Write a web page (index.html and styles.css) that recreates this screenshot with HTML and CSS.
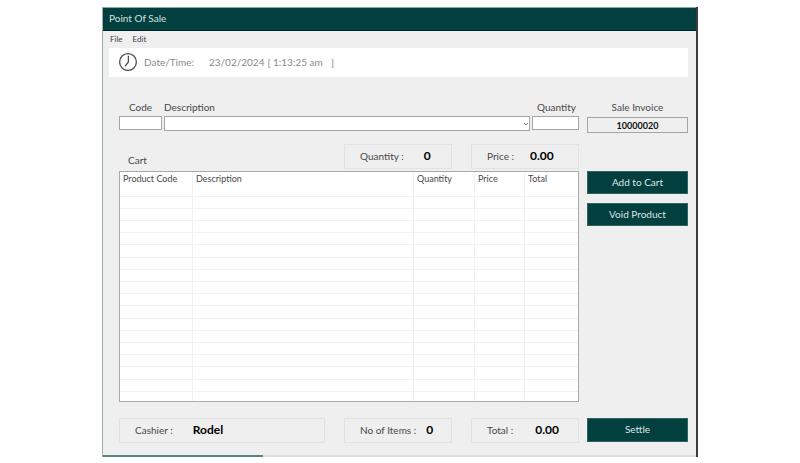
FILE: index.html
```html
<!DOCTYPE html>
<html lang="en">
<head>
<meta charset="utf-8">
<title>Point Of Sale</title>
<meta name="viewport" content="width=device-width, initial-scale=1">
<link rel="stylesheet" href="styles.css">
</head>
<body>
<main class="window">
  <header class="titlebar"><h1>Point Of Sale</h1></header>
  <nav class="menubar"><a href="#file">File</a><a href="#edit">Edit</a></nav>
  <section class="datebar">
    <svg class="clock" viewBox="0 0 20 20" aria-hidden="true"><circle cx="10" cy="10" r="8.4"/><path d="M10.4 3.8V10L7 14.4"/></svg>
    <span class="datelabel">Date/Time:</span>
    <span class="date">23/02/2024</span><span class="bracket">[</span><span class="time">1:13:25 am</span><span>]</span>
  </section>
  <div class="content">
    <form class="entry">
      <div class="field"><label for="code">Code</label><input id="code" type="text"></div>
      <div class="field"><label class="flush" for="description">Description</label>
        <div class="combo"><select id="description"><option></option></select>
          <svg class="chevron" viewBox="0 0 6 6" aria-hidden="true"><path d="M1 2l2 2 2-2"/></svg></div>
      </div>
      <div class="field"><label for="quantity" class="right">Quantity</label><input id="quantity" type="text"></div>
    </form>
    <div class="field invoice"><label for="invoice">Sale Invoice</label><input id="invoice" type="text" value="10000020" readonly></div>

    <div class="summary">
      <h2>Cart</h2>
      <div class="box"><span>Quantity :</span><strong>0</strong></div>
      <div class="box"><span>Price :</span><strong>0.00</strong></div>
    </div>

    <div class="cart">
      <table>
        <colgroup><col class="c-code"><col class="c-desc"><col class="c-qty"><col class="c-price"><col></colgroup>
        <thead><tr><th>Product Code</th><th>Description</th><th>Quantity</th><th>Price</th><th>Total</th></tr></thead>
        <tbody>
          <tr><td></td><td></td><td></td><td></td><td></td></tr>
          <tr><td></td><td></td><td></td><td></td><td></td></tr>
          <tr><td></td><td></td><td></td><td></td><td></td></tr>
          <tr><td></td><td></td><td></td><td></td><td></td></tr>
          <tr><td></td><td></td><td></td><td></td><td></td></tr>
          <tr><td></td><td></td><td></td><td></td><td></td></tr>
          <tr><td></td><td></td><td></td><td></td><td></td></tr>
          <tr><td></td><td></td><td></td><td></td><td></td></tr>
          <tr><td></td><td></td><td></td><td></td><td></td></tr>
          <tr><td></td><td></td><td></td><td></td><td></td></tr>
          <tr><td></td><td></td><td></td><td></td><td></td></tr>
          <tr><td></td><td></td><td></td><td></td><td></td></tr>
          <tr><td></td><td></td><td></td><td></td><td></td></tr>
          <tr><td></td><td></td><td></td><td></td><td></td></tr>
          <tr><td></td><td></td><td></td><td></td><td></td></tr>
          <tr><td></td><td></td><td></td><td></td><td></td></tr>
          <tr><td></td><td></td><td></td><td></td><td></td></tr>
        </tbody>
      </table>
    </div>
    <div class="actions"><button type="button">Add to Cart</button><button type="button">Void Product</button></div>

    <div class="totals">
      <div class="box cashier"><span>Cashier :</span><strong>Rodel</strong></div>
      <div class="box"><span>No of Items :</span><strong>0</strong></div>
      <div class="box"><span>Total :</span><strong>0.00</strong></div>
    </div>
    <div class="settle"><button type="button">Settle</button></div>
  </div>
  <div class="bottomline"></div>
</main>
</body>
</html>
```
FILE: styles.css
```css
* { box-sizing: border-box; }

body {
  margin: 0;
  padding: 7px 8px 6px;
  background: #fff;
  color: #484848;
  font: 10px/12px "Century Gothic", Lato, sans-serif;
}

.window {
  max-width: 596px;
  margin: 0 auto;
  background: #efefef;
  border-left: 1px solid #9db0a8;
  border-right: 2px solid #3a3d3d;
}

.titlebar {
  height: 24px;
  padding: 0 6px 2px;
  display: flex;
  align-items: center;
  background: #023f3f;
  border-top: 1px solid #8ba8a4;
  border-bottom: 1px solid #012626;
}

h1, h2 { margin: 0; font-size: 10px; font-weight: 400; }
h1 { color: #d5e0e0; }

.menubar {
  height: 17px;
  padding: 0 7px 2px;
  display: flex;
  align-items: center;
  gap: 10px;
  font-size: 8px;
}
.menubar a { color: #3c3c3c; text-decoration: none; }

.datebar {
  height: 29px;
  margin: 0 8px 0 6px;
  padding: 0 9px 2px;
  display: flex;
  align-items: center;
  background: #fff;
  color: #8a8a8a;
}
.clock { width: 20px; height: 20px; margin-right: 6px; fill: none; stroke: #4c4c4c; stroke-width: 1.3; }
.datelabel { width: 65px; }
.date { width: 56px; }
.bracket { width: 8px; text-align: center; }
.time { width: 58px; }

.content {
  padding: 24px 8px 0 16px;
  display: grid;
  grid-template-columns: 1fr 101px;
  column-gap: 8px;
}

.entry {
  display: grid;
  grid-template-columns: 43px 1fr 47px;
  column-gap: 2px;
}

.field { display: flex; flex-direction: column; }
.field label { height: 15px; line-height: 12px; text-align: center; white-space: nowrap; }
.field label.flush { text-align: left; }
.field label.right { align-self: flex-end; padding-right: 3px; }

input, select {
  width: 100%;
  height: 14px;
  padding: 0 3px;
  border: 1px solid #a5a5a5;
  border-radius: 0;
  background: #fff;
  color: inherit;
  font: inherit;
}
select { display: block; height: 15px; appearance: none; }
.combo { position: relative; }
.chevron { position: absolute; right: 1px; top: 5px; width: 6px; height: 6px; fill: none; stroke: #777; stroke-width: 1; }
.invoice input { height: 16px; margin-top: 1px; background: #efefef; color: #111; font-size: 9px; font-weight: 700; text-align: center; }

.summary, .totals {
  grid-column: 1;
  display: grid;
  grid-template-columns: 1fr 108px 108px;
  column-gap: 19px;
}
.summary { margin-top: 11px; }
.summary h2 { align-self: end; padding-left: 9px; margin-bottom: 3px; }

.box {
  height: 25px;
  padding: 0 15px 2px;
  display: flex;
  align-items: center;
  gap: 20px;
  border: 1px solid #e2e2e2;
  white-space: nowrap;
}
.box strong { font-size: 12px; color: #000; }
.summary .box:last-child { gap: 16px; }
.totals .box { gap: 10px; }
.totals .box:last-child { gap: 22px; }
.totals .box.cashier { gap: 20px; }

.cart { grid-column: 1; margin-top: 2px; border: 1px solid #a9a9a9; background: #fff; }
table { width: 100%; border-collapse: separate; border-spacing: 0; table-layout: fixed; }
.c-code { width: 73px; }
.c-desc { width: 221px; }
.c-qty { width: 61px; }
.c-price { width: 50px; }
th, td { padding: 0; border-right: 1px solid #f1f1f1; border-bottom: 1px solid #f1f1f1; }
th:last-child, td:last-child { border-right: 0; }
th { height: 25px; padding: 1px 3px 0; font-size: 9px; font-weight: 400; text-align: left; vertical-align: top; white-space: nowrap; }
td { height: 12px; }
tr:nth-child(5n) td { height: 13px; }
tr:last-child td { height: 9px; border-bottom: 0; }

.actions { margin-top: 2px; display: flex; flex-direction: column; gap: 9px; }
button {
  width: 100%;
  height: 23px;
  padding: 0 0 2px;
  border: 1px solid #2e6360;
  border-radius: 0;
  background: #023f3f;
  color: #dce6e5;
  font: inherit;
}

.totals, .settle { margin-top: 16px; }
.settle button { height: 24px; }

.bottomline { height: 2px; margin-top: 12px; background: linear-gradient(90deg, #5d8580 27%, #dedede 27%); }
```
